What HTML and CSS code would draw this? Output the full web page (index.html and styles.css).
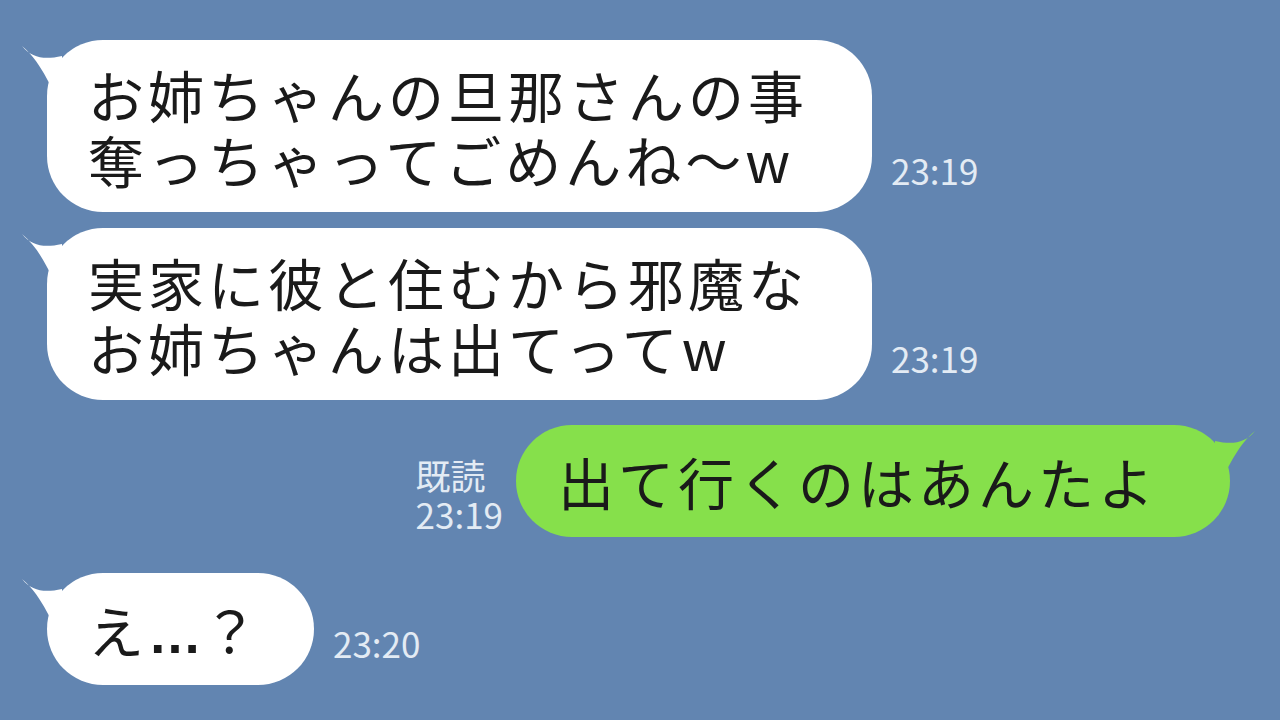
FILE: index.html
```html
<!DOCTYPE html>
<html lang="ja">
<head>
  <meta charset="UTF-8" />
  <title>トーク</title>
  <link rel="stylesheet" href="styles.css">
</head>
<body>
  <div class="chat">
    <div class="row left">
      <div class="bubble white">
        <svg class="tail" width="40" height="60" viewBox="0 0 40 60"><path d="M0 2 C10 14 22 16 40 12 L40 60 C30 50 22 20 0 2 Z" fill="#fff"/></svg>
        <p>お姉ちゃんの旦那さんの事<br>奪っちゃってごめんね～w</p>
      </div>
      <div class="time">23:19</div>
    </div>

    <div class="row left">
      <div class="bubble white">
        <svg class="tail" width="40" height="60" viewBox="0 0 40 60"><path d="M0 2 C10 14 22 16 40 12 L40 60 C30 50 22 20 0 2 Z" fill="#fff"/></svg>
        <p>実家に彼と住むから邪魔な<br>お姉ちゃんは出てってw</p>
      </div>
      <div class="time">23:19</div>
    </div>

    <div class="row right">
      <div class="meta">
        <div>既読</div>
        <div>23:19</div>
      </div>
      <div class="bubble green">
        <svg class="tail" width="40" height="60" viewBox="0 0 40 60"><path d="M40 2 C30 14 18 16 0 12 L0 60 C10 50 18 20 40 2 Z" fill="#86e04b"/></svg>
        <p>出て行くのはあんたよ</p>
      </div>
    </div>

    <div class="row left last">
      <div class="bubble white short">
        <svg class="tail" width="40" height="60" viewBox="0 0 40 60"><path d="M0 2 C10 14 22 16 40 12 L40 60 C30 50 22 20 0 2 Z" fill="#fff"/></svg>
        <p>え<span class="dots">…</span>？</p>
      </div>
      <div class="time">23:20</div>
    </div>
  </div>
</body>
</html>
```

FILE: styles.css
```css
* {
  box-sizing: border-box;
}

body {
  margin: 0;
  width: 1280px;
  height: 720px;
  overflow: hidden;
  background: #6285b1;
  font-family: "Noto Sans CJK JP", "Noto Sans", sans-serif;
}

.chat {
  display: flex;
  flex-direction: column;
  padding: 40px 50px 0 47px;
}

.row {
  display: flex;
  align-items: flex-end;
}

.row + .row {
  margin-top: 16px;
}

.row.right {
  justify-content: flex-end;
  margin-top: 25px;
}

.row.last {
  margin-top: 36px;
}

.bubble {
  position: relative;
  border-radius: 56px;
  padding: 21px 64px 21px 41px;
}

.bubble p {
  margin: 0;
  font-size: 56px;
  line-height: 65px;
  letter-spacing: 4px;
  color: #1a1a1a;
  white-space: nowrap;
}

.white {
  background: #fff;
}

.green {
  background: #86e04b;
  padding: 23px 72px 24px 42px;
}

.short {
  padding: 23px 52px 24px 41px;
}

.dots {
  font-family: "Liberation Sans", sans-serif;
  font-size: 54px;
  font-weight: 700;
  line-height: 1;
  letter-spacing: 0;
}

.tail {
  position: absolute;
  top: 4px;
  left: -25px;
}

.green .tail {
  left: auto;
  right: -25px;
}

.time {
  margin: 0 0 22px 19px;
  font-size: 35px;
  line-height: 40px;
  color: #e3ebf4;
}

.meta {
  margin: 0 13px 4px 0;
  font-size: 35px;
  line-height: 39px;
  color: #e3ebf4;
}
```
